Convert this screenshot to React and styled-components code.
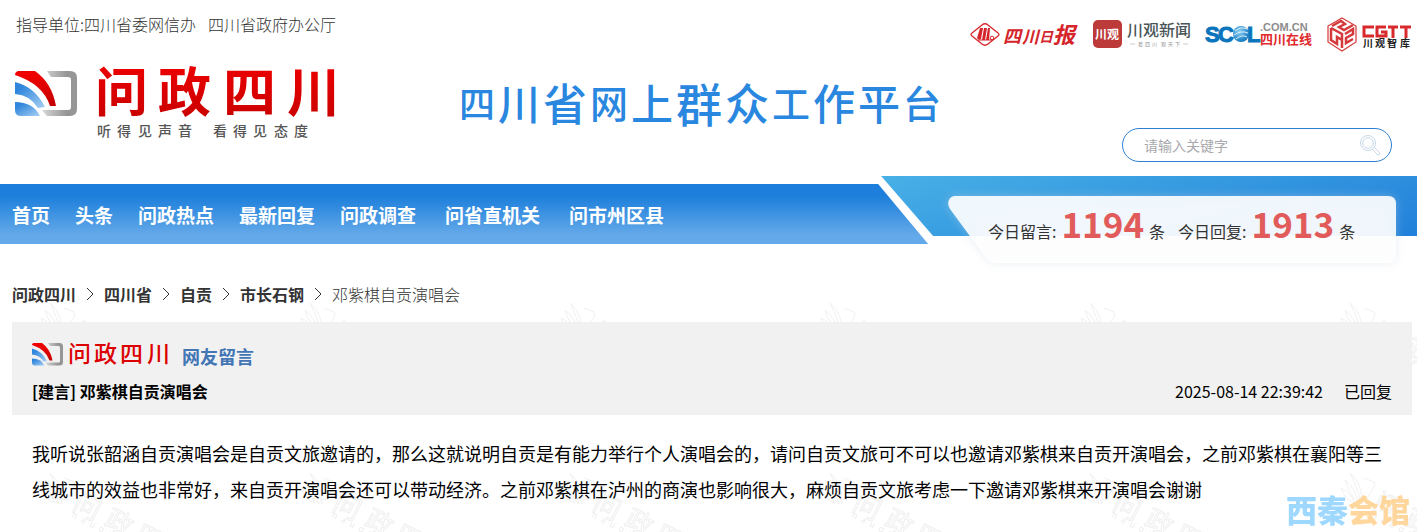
import React from 'react';
import styled, { createGlobalStyle } from 'styled-components';

const GlobalStyle = createGlobalStyle`
  * {
    box-sizing: border-box;
  }

  body {
    margin: 0;
    background: #fff;
    color: #333;
    font-family: "Noto Sans CJK SC", "Noto Sans", sans-serif;
    font-size: 16px;
  }

  a {
    color: inherit;
    text-decoration: none;
  }

  svg {
    display: block;
    flex: none;
    overflow: visible;
  }
`;

const Page = styled.div`
  min-height: 100vh;
  display: flex;
  flex-direction: column;
  overflow: hidden;
`;

const Header = styled.header`
  display: flex;
  align-items: flex-start;
  padding: 0 5px 0 12px;
`;

const HeaderLeft = styled.div`
  display: flex;
  flex-direction: column;
  gap: 28px;
  padding-top: 12px;
`;

const Guide = styled.p`
  display: flex;
  gap: 12px;
  margin: 0;
  padding-left: 4px;
  line-height: 24px;
  font-weight: 300;
  color: #333;
`;

const Slogan = styled.h1`
  flex: 1;
  max-width: 482px;
  display: flex;
  justify-content: space-between;
  align-items: center;
  margin: 76px auto 0 106px;
  height: 52px;
  color: #2a87df;
  font-weight: 500;
  line-height: 52px;
`;

const Brush = styled.span`
  font-size: ${({ $size }) => $size}px;
`;

const HeaderRight = styled.div`
  display: flex;
  flex-direction: column;
  align-items: flex-end;
  padding: 12px 0 14px;
  gap: 76px;
`;

const Partners = styled.div`
  display: flex;
  gap: 15px;
`;

const Search = styled.form`
  display: flex;
  align-items: center;
  width: 270px;
  height: 34px;
  margin-right: 20px;
  padding: 0 10px 0 21px;
  border: 1px solid #2f7fd0;
  border-radius: 17px;
`;

const SearchInput = styled.input`
  flex: 1;
  min-width: 0;
  border: 0;
  outline: 0;
  padding: 0;
  background: none;
  font: inherit;
  font-size: 14px;

  &::placeholder {
    color: #a9a9ad;
  }
`;

const SearchButton = styled.button`
  border: 0;
  padding: 0;
  background: none;
  cursor: pointer;
`;

const NavRow = styled.div`
  display: flex;
  align-items: flex-start;
`;

const Nav = styled.nav`
  flex: none;
  width: 65.5%;
  height: 60px;
  margin-top: 8px;
  padding: 2px 0 0 12px;
  display: flex;
  align-items: center;
  gap: 25px;
  background: linear-gradient(#1d7fdb 20%, #64a9e9 85%);
  clip-path: polygon(0 0, calc(100% - 50px) 0, 100% 100%, 0 100%);
`;

const NavLink = styled.a`
  margin-left: ${({ $wide }) => ($wide ? 4 : 0)}px;
  color: #fff;
  font-size: 19px;
  font-weight: 700;
  line-height: 28px;
  white-space: nowrap;
`;

const StatsBar = styled.div`
  position: relative;
  flex: 1;
  height: 60px;
  margin-left: -47px;
  padding: 20px 21px 0 0;
  display: flex;
  justify-content: flex-end;
  align-items: flex-start;

  &::before {
    content: "";
    position: absolute;
    inset: 0;
    background: linear-gradient(165deg, #48b0e6, #2180da);
    clip-path: polygon(0 0, 100% 0, 100% 100%, 52px 100%);
  }
`;

const StatsCard = styled.div`
  position: relative;
  z-index: 1;
  width: 448px;
  height: 67px;
  padding: 0 0 0 40px;
`;

const CardShape = styled.svg`
  position: absolute;
  inset: 0;
  filter: drop-shadow(0 0 5px rgba(200, 210, 225, 0.45));
`;

const Stats = styled.div`
  position: relative;
  display: flex;
  gap: 13px;
  white-space: nowrap;
`;

const Stat = styled.div`
  display: flex;
  align-items: baseline;
  gap: 5px;
  line-height: 53px;
`;

const StatNumber = styled.strong`
  color: #e25b5b;
  font-size: 35px;
  font-weight: 700;
`;

const Main = styled.main`
  position: relative;
  flex: 1;
  padding: 38px 5px 0 12px;
`;

const Backdrop = styled.svg`
  position: absolute;
  inset: 0;
`;

const Content = styled.div`
  position: relative;
`;

const Crumbs = styled.nav`
  display: flex;
  align-items: center;
  gap: 11px;
  line-height: 24px;
  font-weight: 700;
`;

const Current = styled.span`
  font-weight: 300;
`;

const MessageHead = styled.section`
  margin-top: 16px;
  padding: 20px 20px 12px;
  background: #f1f1f1;
  color: #000;
`;

const HeadTop = styled.div`
  display: flex;
  gap: 10px;
  height: 28px;
`;

const Kind = styled.h2`
  margin: 0;
  color: #4376b5;
  font-size: 18px;
  line-height: 28px;
`;

const HeadBottom = styled.div`
  display: flex;
  justify-content: space-between;
  margin-top: 9px;
  line-height: 24px;
`;

const Title = styled.h3`
  margin: 0;
  font-size: 16px;
  font-weight: 700;
`;

const Meta = styled.div`
  display: flex;
  gap: 21px;
`;

const MessageBody = styled.p`
  margin: 0;
  padding: 20px;
  color: #000;
  font-size: 18px;
  line-height: 36px;
`;

const Stamp = styled.div`
  position: fixed;
  right: 7px;
  bottom: 0;
  color: #9fd8ff;
  font-size: 31px;
  font-weight: 900;
  line-height: 46px;
  pointer-events: none;

  span {
    color: #ffd79c;
  }
`;

const sloganChars = [
  ['四', 36], ['川', 42], ['省', 44], ['网', 38], ['上', 42], ['群', 46],
  ['众', 44], ['工', 38], ['作', 42], ['平', 42], ['台', 38],
];

const navItems = [
  { label: '首页' },
  { label: '头条' },
  { label: '问政热点' },
  { label: '最新回复' },
  { label: '问政调查' },
  { label: '问省直机关', wide: true },
  { label: '问市州区县', wide: true },
];

const crumbs = ['问政四川', '四川省', '自贡', '市长石钢'];

function BrandMark() {
  return (
    <>
      <defs>
        <linearGradient id="markBlue" x1="0" y1="0" x2="1" y2="1">
          <stop offset="0.2" stopColor="#2f86dc" />
          <stop offset="1" stopColor="#a9d0f3" />
        </linearGradient>
        <linearGradient id="markGray" x1="0" y1="0" x2="1" y2="0">
          <stop offset="0" stopColor="#d8d8d8" />
          <stop offset="0.7" stopColor="#969696" />
        </linearGradient>
        <linearGradient id="brandRed" x1="0" y1="0" x2="0" y2="1">
          <stop offset="0.1" stopColor="#f00000" />
          <stop offset="1" stopColor="#c40000" />
        </linearGradient>
      </defs>
      <path d="M32 0H55Q62 0 62 7V38Q62 45 55 45H32L27 39H53Q56 39 56 36V9Q56 6 53 6H36Z" fill="url(#markGray)" />
      <path d="M3 0H20Q37 12 41 35H35Q28 13 0 4Q0 1 3 0Z" fill="url(#brandRed)" />
      <path d="M0 11Q20 16 30 36L23 37Q15 24 0 23Z" fill="url(#markBlue)" />
      <path d="M0 31Q18 31 25 45H6Q0 45 0 39Z" fill="url(#markBlue)" />
    </>
  );
}

function Brand() {
  return (
    <svg width="341" height="80" viewBox="0 0 341 80" role="img" aria-label="问政四川">
      <g transform="translate(3 7)">
        <BrandMark />
      </g>
      <text x="83 146 211 275" y="48" fontSize="53" fontWeight="700" fill="url(#brandRed)">问政四川</text>
      <g fontSize="14" fontWeight="500" fill="#555">
        <text x="85 105 126 146 166" y="72">听得见声音</text>
        <text x="201 221 241 262 282" y="72">看得见态度</text>
      </g>
    </svg>
  );
}

function SmallBrand() {
  return (
    <svg width="140" height="26" viewBox="0 0 140 26" role="img" aria-label="问政四川">
      <g transform="translate(0 1) scale(0.5)">
        <BrandMark />
      </g>
      <text x="36 62 88 115" y="20" fontSize="23" fontWeight="500" fill="#dc0000">问政四川</text>
    </svg>
  );
}

function DailyLogo() {
  return (
    <svg width="108" height="40" viewBox="0 0 108 40" fill="#d5252b">
      <path d="M3 21Q1 22.500 3 24L13 32Q16 34.500 19 32L29 24Q31 22.500 29 21L19 13Q16 10.500 13 13Z" fill="none" stroke="#d5252b" strokeWidth="1.300" />
      <path d="M11 16H14L12 27Q10 29 8 26ZM15 16H18L16 28H13ZM19 16H21L20 28H17Z" />
      <circle cx="23" cy="26" r="1.800" fill="none" stroke="#d5252b" />
      <path d="M9 28H23" stroke="#d5252b" />
      <g fontWeight="700" fontStyle="italic">
        <text x="34" y="31" fontSize="18">四</text>
        <text x="53" y="31" fontSize="17">川</text>
        <text x="70" y="30" fontSize="14">日</text>
        <text x="84" y="31" fontSize="22">报</text>
      </g>
    </svg>
  );
}

function NewsLogo() {
  return (
    <svg width="99" height="40" viewBox="0 0 99 40">
      <rect x="1" y="8" width="29" height="28" rx="5" fill="#bd3a3a" />
      <text x="3" y="27" fontSize="12" fontWeight="700" fill="#fff">川观</text>
      <text x="35" y="24" fontSize="16" fontWeight="500" fill="#4a5558">川观新闻</text>
      <path d="M38 32H43M91 32H96" stroke="#ccc" />
      <text x="46 53 60 69 76 83" y="34" fontSize="5" fill="#999">看四川观天下</text>
    </svg>
  );
}

function ScolLogo() {
  return (
    <svg width="106" height="40" viewBox="0 0 106 40">
      <defs>
        <radialGradient id="globe" cx="0.4" cy="0.35" r="0.7">
          <stop offset="0" stopColor="#8fd2f4" />
          <stop offset="1" stopColor="#0872bd" />
        </radialGradient>
      </defs>
      <g fontFamily="'Liberation Sans', sans-serif" fontWeight="700">
        <g fontSize="22" fill="#0a75bd" stroke="#0a75bd">
          <text x="-1" y="30">S</text>
          <text x="12" y="30">C</text>
          <text x="41" y="30">L</text>
        </g>
        <text x="54" y="19" fontSize="11" fill="#8c8c8c">.COM.CN</text>
      </g>
      <circle cx="35" cy="22" r="8" fill="url(#globe)" />
      <path d="M29 19Q35 14 41 17M28 23Q35 18 42 21M30 27Q36 22 41 25" fill="none" stroke="#d9f0fb" />
      <text x="54" y="32" fontSize="13" fontWeight="700" fill="#e02a2b">四川在线</text>
    </svg>
  );
}

function ThinkTankLogo() {
  return (
    <svg width="85" height="40" viewBox="0 0 85 40">
      <g fill="none" stroke="#d6393b">
        <path d="M15 6L29 14V30L15 39L1 30V14Z" strokeWidth="1.200" />
        <path d="M4 16L15 22V36M4 16V28L10 32V25L15 28" strokeWidth="2.500" />
        <path d="M5 14L14 9L18 12L12 15L17 18L26 13M18 22L26 17V22L19 26V31L26 27" strokeWidth="2.500" />
      </g>
      <g fill="none" stroke="#d8292c" strokeWidth="3">
        <path d="M47 15H37V24H47M59 15H50V24H59V20H54M61 15H71M66 15V26M73 15H84M79 15V26" />
      </g>
      <text x="36 48 60 73" y="35" fontSize="10" fontWeight="700" fill="#222">川观智库</text>
    </svg>
  );
}

function SearchIcon() {
  return (
    <svg width="22" height="22" viewBox="0 0 22 22" fill="none" stroke="#c9d9ea">
      <circle cx="9" cy="9" r="7.500" />
      <circle cx="9" cy="9" r="5.300" />
      <path d="M13 15L19 21Q21 21 21 19L15 13" />
    </svg>
  );
}

function Chevron() {
  return (
    <svg width="6" height="12" viewBox="0 0 6 12" fill="none" stroke="#333">
      <path d="M0 0L6 6L0 12" />
    </svg>
  );
}

function Watermark() {
  return (
    <Backdrop width="100%" height="100%" aria-hidden="true">
      <defs>
        <pattern id="tile" x="38" y="56" width="260" height="170" patternUnits="userSpaceOnUse">
          <g fill="none" stroke="#f0f0f0" strokeWidth="1">
            <path d="M12 3Q25 14 24 34Q18 15 12 3ZM7 10Q17 17 21 34Q12 26 7 10ZM3 18Q12 22 17 33Q7 30 3 18Z" />
            <path d="M26 8L36 12Q38 14 36 17L28 30L24 29" />
          </g>
          <text
            transform="translate(33 39) rotate(27)"
            x="0 36 70 102"
            fontSize="27"
            fill="#fff"
            stroke="#efefef"
            strokeWidth="1"
          >
            问政四川
          </text>
          <text transform="translate(33 47) rotate(27)" x="0 10 20 30 40" fontSize="9" fill="#ececec">nauqu</text>
        </pattern>
      </defs>
      <rect width="100%" height="100%" fill="url(#tile)" />
    </Backdrop>
  );
}

function StatItem({ label, value }) {
  return (
    <Stat>
      <span>{label}:</span>
      <StatNumber>{value}</StatNumber>
      <span>条</span>
    </Stat>
  );
}

export default function App() {
  return (
    <Page>
      <GlobalStyle />
      <Header>
        <HeaderLeft>
          <Guide>
            <span>指导单位:四川省委网信办</span>
            <span>四川省政府办公厅</span>
          </Guide>
          <a href="#home"><Brand /></a>
        </HeaderLeft>
        <Slogan>
          {sloganChars.map(([char, size]) => (
            <Brush key={char} $size={size}>{char}</Brush>
          ))}
        </Slogan>
        <HeaderRight>
          <Partners>
            <a href="#daily" aria-label="四川日报"><DailyLogo /></a>
            <a href="#news" aria-label="川观新闻"><NewsLogo /></a>
            <a href="#scol" aria-label="四川在线"><ScolLogo /></a>
            <a href="#cgtt" aria-label="川观智库"><ThinkTankLogo /></a>
          </Partners>
          <Search onSubmit={(e) => e.preventDefault()}>
            <SearchInput type="text" aria-label="请输入关键字" placeholder="请输入关键字" />
            <SearchButton type="submit" aria-label="搜索"><SearchIcon /></SearchButton>
          </Search>
        </HeaderRight>
      </Header>

      <NavRow>
        <Nav>
          {navItems.map(({ label, wide }) => (
            <NavLink key={label} href="#nav" $wide={wide}>{label}</NavLink>
          ))}
        </Nav>
        <StatsBar>
          <StatsCard>
            <CardShape width="448" height="67" viewBox="0 0 448 67" aria-hidden="true">
              <path
                d="M7 0H440Q448 0 448 8V59Q448 67 440 67H48Q42 67 38 62L2 13Q-1 8 1 4Q3 0 7 0Z"
                fill="#fff"
                fillOpacity="0.9"
              />
            </CardShape>
            <Stats>
              <StatItem label="今日留言" value="1194" />
              <StatItem label="今日回复" value="1913" />
            </Stats>
          </StatsCard>
        </StatsBar>
      </NavRow>

      <Main>
        <Watermark />
        <Content>
          <Crumbs>
            {crumbs.map((name) => (
              <React.Fragment key={name}>
                <a href="#crumb">{name}</a>
                <Chevron />
              </React.Fragment>
            ))}
            <Current>邓紫棋自贡演唱会</Current>
          </Crumbs>
          <MessageHead>
            <HeadTop>
              <SmallBrand />
              <Kind>网友留言</Kind>
            </HeadTop>
            <HeadBottom>
              <Title>[建言] 邓紫棋自贡演唱会</Title>
              <Meta>
                <time>2025-08-14 22:39:42</time>
                <span>已回复</span>
              </Meta>
            </HeadBottom>
          </MessageHead>
          <MessageBody>
            我听说张韶涵自贡演唱会是自贡文旅邀请的，那么这就说明自贡是有能力举行个人演唱会的，请问自贡文旅可不可以也邀请邓紫棋来自贡开演唱会，之前邓紫棋在襄阳等三线城市的效益也非常好，来自贡开演唱会还可以带动经济。之前邓紫棋在泸州的商演也影响很大，麻烦自贡文旅考虑一下邀请邓紫棋来开演唱会谢谢
          </MessageBody>
        </Content>
      </Main>
      <Stamp aria-hidden="true">西秦<span>会馆</span></Stamp>
    </Page>
  );
}
